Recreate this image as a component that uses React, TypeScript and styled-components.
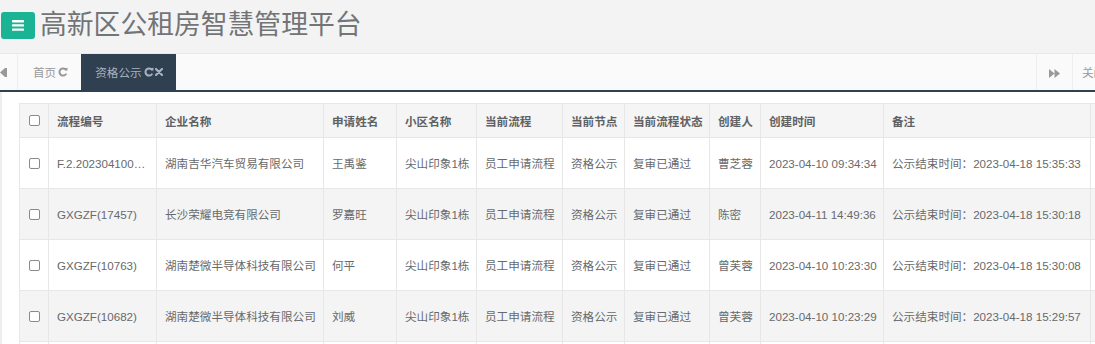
import React from "react";
import styled, { createGlobalStyle } from "styled-components";

const GlobalStyle = createGlobalStyle`
  html, body { margin: 0; padding: 0; background: #fff; }
  body {
    width: 1095px; height: 344px; overflow: hidden;
    font-family: "Liberation Sans", Arial, "Noto Sans CJK SC", sans-serif;
    color: #676a6c;
  }
  * { box-sizing: border-box; }
`;

const Page = styled.div`
  display: flex;
  flex-direction: column;
  align-items: flex-start;
  width: 1095px;
  height: 344px;
  overflow: hidden;
`;

const Header = styled.div`
  height: 54px;
  flex: 0 0 54px;
  width: 1095px;
  background: #f3f3f4;
  border-bottom: 1px solid #e7eaec;
  display: flex;
  align-items: flex-start;
  padding: 12px 0 0 1px;
  gap: 5px;
`;

const MenuButton = styled.div`
  width: 34px;
  height: 27px;
  border-radius: 3px;
  background: #1ab394;
  display: flex;
  align-items: center;
  justify-content: center;
`;

const Title = styled.div`
  font-size: 26.8px;
  line-height: 26px;
  margin-top: -2px;
  color: #727476;
  font-family: "Noto Sans CJK SC", sans-serif;
  white-space: nowrap;
`;

const TabBar = styled.div`
  height: 38px;
  flex: 0 0 38px;
  width: 1153px;
  background: #fafafa;
  border-bottom: 2px solid #2f4050;
  display: flex;
  align-items: stretch;
`;

const NavButton = styled.div<{ $w: number; $left?: boolean }>`
  width: ${(p) => p.$w}px;
  flex: 0 0 ${(p) => p.$w}px;
  display: flex;
  align-items: center;
  justify-content: ${(p) => (p.$left ? "flex-start" : "center")};
  overflow: hidden;
  border-right: 1px solid #eee;
  ${(p) => (p.$left ? "" : "border-left: 1px solid #eee;")}
  color: #999;
`;

const Tab = styled.div<{ $active?: boolean }>`
  display: flex;
  align-items: center;
  gap: 1px;
  padding: 0 13px 0 ${(p) => (p.$active ? 14 : 15)}px;
  font-size: 11.6px;
  font-family: "Noto Sans CJK SC", sans-serif;
  background: ${(p) => (p.$active ? "#2f4050" : "transparent")};
  color: ${(p) => (p.$active ? "#a7b1c2" : "#999")};
  white-space: nowrap;
`;

const Spacer = styled.div`
  flex: 1;
`;

const CloseText = styled.div`
  display: flex;
  align-items: center;
  padding-left: 9px;
  flex: 0 0 80px;
  font-size: 11.6px;
  font-family: "Noto Sans CJK SC", sans-serif;
  color: #999;
  white-space: nowrap;
`;

const Content = styled.div`
  flex: 1;
  width: 1095px;
  background: #fff;
  border-left: 2px solid #eeeeee;
  padding: 11px 0 0 17px;
  overflow: hidden;
`;

const Table = styled.table`
  border-collapse: collapse;
  table-layout: fixed;
  width: 1171px;
  font-size: 11.6px;
  font-family: "Liberation Sans", Arial, "Noto Sans CJK SC", sans-serif;
  color: #676a6c;
`;

const HeadRow = styled.tr`
  background: #f5f5f5;
  height: 34px;
`;

const BodyRow = styled.tr<{ $striped?: boolean }>`
  background: ${(p) => (p.$striped ? "#f4f4f4" : "#fff")};
  height: 51px;
`;

const Th = styled.th`
  border: 1px solid #e7e7e7;
  padding: 0 0 0 8px;
  text-align: left;
  font-weight: bold;
  color: #5f6163;
  white-space: nowrap;
  overflow: hidden;
`;

const Td = styled.td<{ $clip?: boolean }>`
  border: 1px solid #e7e7e7;
  padding: 0 ${(p) => (p.$clip ? 8 : 0)}px 0 8px;
  text-align: left;
  white-space: nowrap;
  overflow: hidden;
  text-overflow: ${(p) => (p.$clip ? "ellipsis" : "clip")};
`;

const CheckCell = styled.td`
  border: 1px solid #e7e7e7;
  padding: 0;
  text-align: center;
`;

const CheckHead = styled.th`
  border: 1px solid #e7e7e7;
  padding: 0;
  text-align: center;
`;

const Box = styled.span`
  display: inline-block;
  width: 11px;
  height: 11px;
  border: 1px solid #8a8a8a;
  border-radius: 2px;
  background: #fff;
  vertical-align: middle;
  margin-top: -2px;
`;

const Bars = () => (
  <svg width="12" height="11" viewBox="0 0 12 11">
    <rect x="0" y="0" width="12" height="2.4" rx="0.6" fill="#fff" />
    <rect x="0" y="4.2" width="12" height="2.4" rx="0.6" fill="#fff" />
    <rect x="0" y="8.4" width="12" height="2.4" rx="0.6" fill="#fff" />
  </svg>
);

const Refresh = () => (
  <svg width="10" height="10" viewBox="0 0 10 10" style={{ marginLeft: 1 }}>
    <path d="M8.2 3.2 A3.6 3.6 0 1 0 8.3 6.6" fill="none" stroke="currentColor" strokeWidth="2" />
    <path d="M6.4 1.2 L9.6 0.8 L9.2 4.2 Z" fill="currentColor" />
  </svg>
);

const Cross = () => (
  <svg width="8" height="8" viewBox="0 0 8 8">
    <path d="M1 1 L7 7 M7 1 L1 7" stroke="currentColor" strokeWidth="2.2" strokeLinecap="round" />
  </svg>
);

const Backward = () => (
  <svg width="13" height="9" viewBox="0 0 13 9" style={{ marginLeft: -6 }}>
    <path d="M6 0 L0 4.5 L6 9 Z M11 0 L6 4.5 L11 9 Z" fill="currentColor" />
    <rect x="11" y="0" width="2" height="9" fill="currentColor" />
  </svg>
);

const Forward = () => (
  <svg width="11" height="9" viewBox="0 0 11 9" style={{ marginTop: 2 }}>
    <path d="M0 0 L5.5 4.5 L0 9 Z M5.5 0 L11 4.5 L5.5 9 Z" fill="currentColor" />
  </svg>
);

const widths = [29, 108, 167, 73, 80, 86, 62, 85, 51, 123, 207, 100];
const headers = ["流程编号", "企业名称", "申请姓名", "小区名称", "当前流程", "当前节点", "当前流程状态", "创建人", "创建时间", "备注", "操作"];

const rows = [
  ["F.2.2023041000123", "湖南吉华汽车贸易有限公司", "王禹鉴", "尖山印象1栋", "员工申请流程", "资格公示", "复审已通过", "曹芝蓉", "2023-04-10 09:34:34", "公示结束时间：2023-04-18 15:35:33", ""],
  ["GXGZF(17457)", "长沙荣耀电竞有限公司", "罗嘉旺", "尖山印象1栋", "员工申请流程", "资格公示", "复审已通过", "陈密", "2023-04-11 14:49:36", "公示结束时间：2023-04-18 15:30:18", ""],
  ["GXGZF(10763)", "湖南楚微半导体科技有限公司", "何平", "尖山印象1栋", "员工申请流程", "资格公示", "复审已通过", "曾芙蓉", "2023-04-10 10:23:30", "公示结束时间：2023-04-18 15:30:08", ""],
  ["GXGZF(10682)", "湖南楚微半导体科技有限公司", "刘威", "尖山印象1栋", "员工申请流程", "资格公示", "复审已通过", "曾芙蓉", "2023-04-10 10:23:29", "公示结束时间：2023-04-18 15:29:57", ""],
  ["GXGZF(10681)", "湖南楚微半导体科技有限公司", "张敏", "尖山印象1栋", "员工申请流程", "资格公示", "复审已通过", "曾芙蓉", "2023-04-10 10:23:28", "公示结束时间：2023-04-18 15:29:45", ""],
];

export default function App() {
  return (
    <Page>
      <GlobalStyle />
      <Header>
        <MenuButton>
          <Bars />
        </MenuButton>
        <Title>高新区公租房智慧管理平台</Title>
      </Header>
      <TabBar>
        <NavButton $w={18} $left>
          <Backward />
        </NavButton>
        <Tab>
          首页
          <Refresh />
        </Tab>
        <Tab $active>
          资格公示
          <Refresh />
          <Cross />
        </Tab>
        <Spacer />
        <NavButton $w={37}>
          <Forward />
        </NavButton>
        <CloseText>关闭操作</CloseText>
      </TabBar>
      <Content>
        <Table>
          <colgroup>
            {widths.map((w, i) => (
              <col key={i} style={{ width: w }} />
            ))}
          </colgroup>
          <thead>
            <HeadRow>
              <CheckHead>
                <Box />
              </CheckHead>
              {headers.map((h) => (
                <Th key={h}>{h}</Th>
              ))}
            </HeadRow>
          </thead>
          <tbody>
            {rows.map((r, i) => (
              <BodyRow key={i} $striped={i % 2 === 1}>
                <CheckCell>
                  <Box />
                </CheckCell>
                {r.map((c, j) => (
                  <Td key={j} $clip={j === 0}>
                    {c}
                  </Td>
                ))}
              </BodyRow>
            ))}
          </tbody>
        </Table>
      </Content>
    </Page>
  );
}
